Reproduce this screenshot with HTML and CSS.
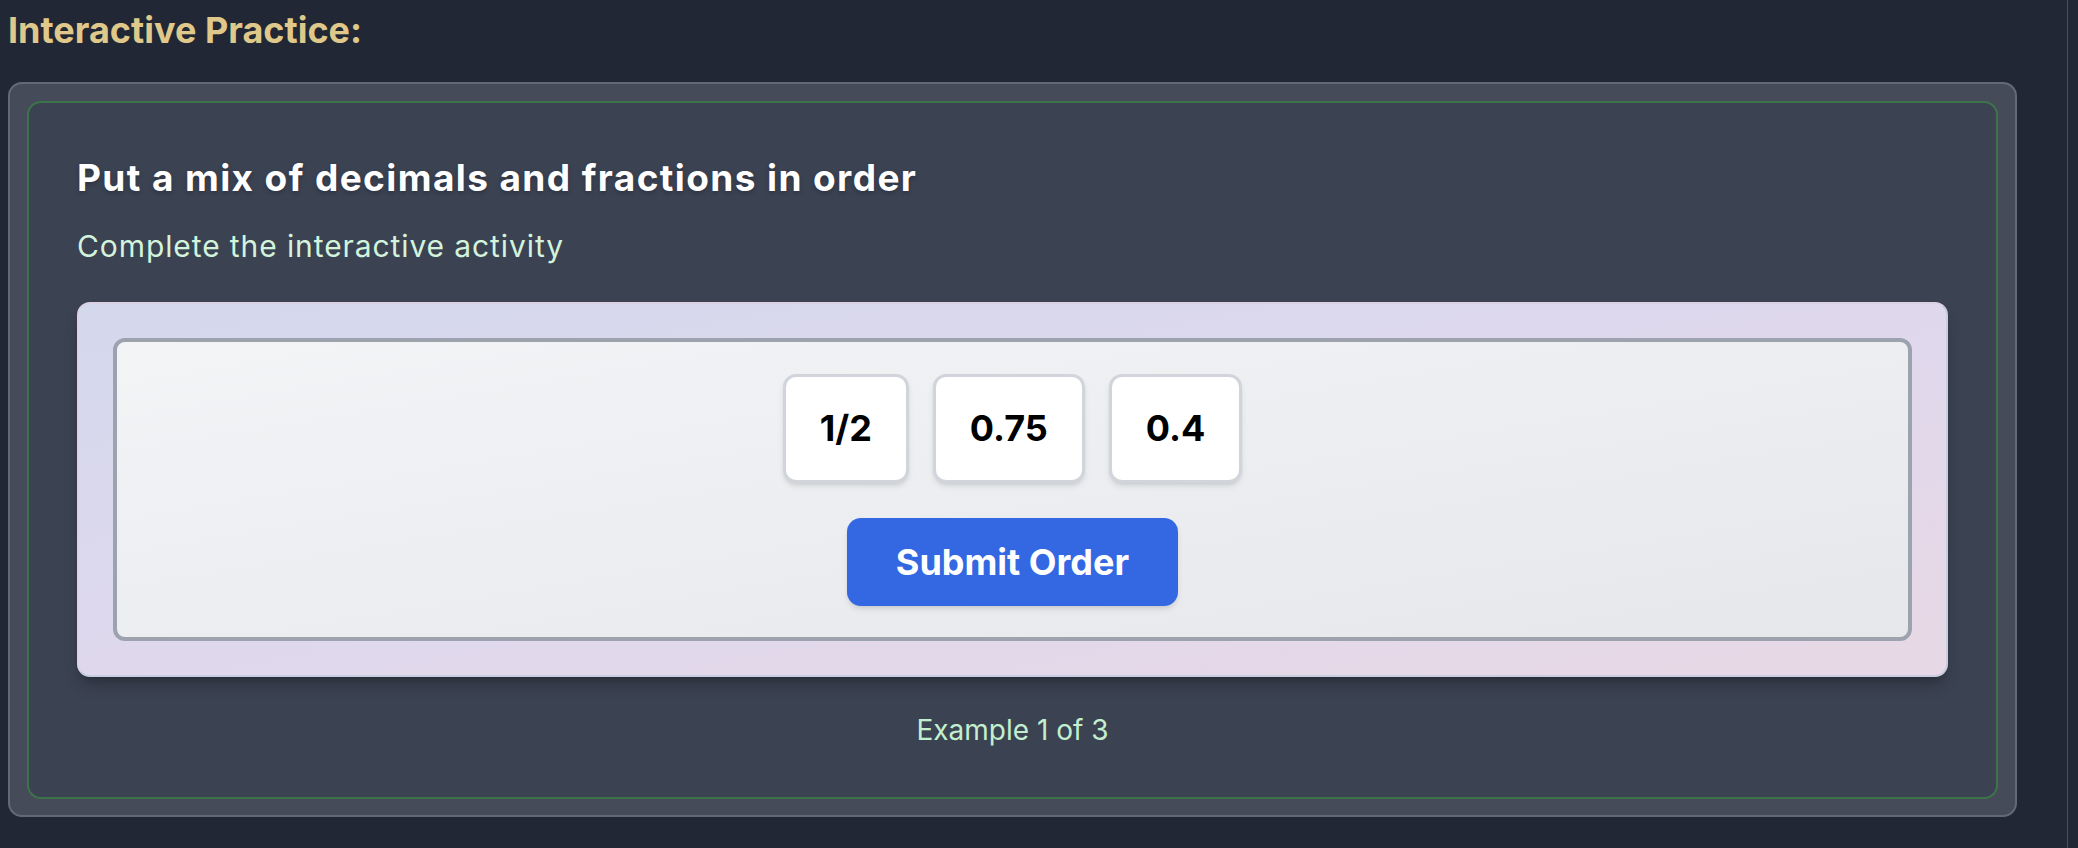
FILE: index.html
```html
<!DOCTYPE html>
<html lang="en">
<head>
<meta charset="utf-8">
<title>Interactive Practice</title>
<link rel="stylesheet" href="styles.css">
</head>
<body>
<div class="page">
  <main class="main">
    <h2 class="section-title">Interactive Practice:</h2>
    <section class="outer-card">
      <div class="inner-card">
        <h3 class="activity-title">Put a mix of decimals and fractions in order</h3>
        <p class="activity-sub">Complete the interactive activity</p>
        <div class="panel">
          <div class="board">
            <div class="tiles">
              <div class="tile">1/2</div>
              <div class="tile">0.75</div>
              <div class="tile">0.4</div>
            </div>
            <button class="submit" type="button">Submit Order</button>
          </div>
        </div>
        <p class="example">Example 1 of 3</p>
      </div>
    </section>
  </main>
  <div class="rail"></div>
</div>
</body>
</html>
```
FILE: styles.css
```css
html, body {
  margin: 0;
  padding: 0;
  height: 100%;
  background: #212735;
  font-family: "Inter", "Noto Sans", "Liberation Sans", sans-serif;
  overflow: hidden;
}

.page {
  display: flex;
  height: 100%;
}

.main {
  flex: 1;
  padding: 0 50px 0 8px;
}

.rail {
  width: 10px;
  border-left: 1px solid #4a5061;
  background: #212735;
}

.section-title {
  margin: 3px 0 25px 0;
  font-size: 36px;
  line-height: 54px;
  font-weight: 700;
  color: #dfc88a;
}

.outer-card {
  background: #454b59;
  border: 2px solid #636977;
  border-radius: 14px;
  padding: 17px 17px 16px 17px;
}

.inner-card {
  background: #3b4252;
  border: 2px solid #3d734a;
  border-radius: 14px;
  padding: 48px 48px 47px 48px;
}

.activity-title {
  margin: 0;
  font-size: 37px;
  line-height: 54px;
  font-weight: 700;
  letter-spacing: 1.4px;
  color: #ffffff;
  text-shadow: 0 2px 4px rgba(0, 0, 0, 0.25);
}

.activity-sub {
  margin: 20px 0 0 0;
  font-size: 30px;
  line-height: 42px;
  letter-spacing: 0.9px;
  color: #d3f3dc;
}

.panel {
  margin-top: 35px;
  padding: 34px;
  border: 2px solid #c9cde0;
  border-top-color: #dad1e3;
  border-left-color: #dbd3e5;
  border-radius: 13px;
  background: linear-gradient(to bottom right, #d4d8ed 0%, #dfd8ed 50%, #e8d8e5 100%);
  box-shadow: 0 10px 15px -3px rgba(0, 0, 0, 0.25), 0 4px 6px -4px rgba(0, 0, 0, 0.2);
}

.board {
  display: flex;
  flex-direction: column;
  align-items: center;
  gap: 35px;
  padding: 32px 0 31px 0;
  border: 4px solid #9ca3af;
  border-radius: 12px;
  background: linear-gradient(to bottom right, #f3f4f6, #e5e7eb);
}

.tiles {
  display: flex;
  gap: 24px;
}

.tile {
  background: #ffffff;
  border: 3px solid #d1d5db;
  border-radius: 13px;
  padding: 24px 34px 25px 34px;
  font-size: 36px;
  line-height: 54px;
  font-weight: 700;
  color: #000000;
  box-shadow: 0 4px 6px -1px rgba(0, 0, 0, 0.1), 0 2px 4px -2px rgba(0, 0, 0, 0.1);
}

.submit {
  font-family: inherit;
  font-size: 36px;
  line-height: 54px;
  font-weight: 700;
  color: #ffffff;
  background: #3468e3;
  border: none;
  border-radius: 14px;
  padding: 17px 49px;
  box-shadow: 0 4px 6px -1px rgba(0, 0, 0, 0.1), 0 2px 4px -2px rgba(0, 0, 0, 0.1);
}

.example {
  margin: 33px 0 0 0;
  text-align: center;
  font-size: 28px;
  line-height: 40px;
  color: #c3efcf;
}
```
